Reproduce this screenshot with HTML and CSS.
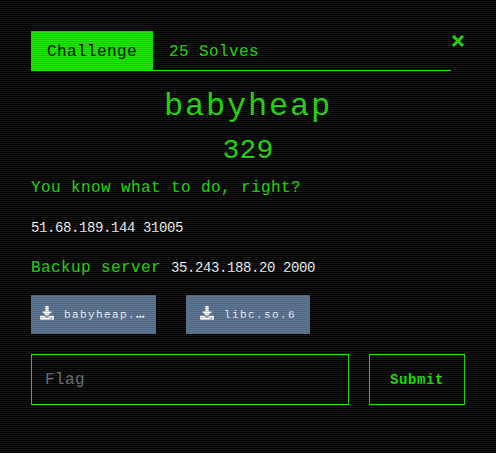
FILE: index.html
```html
<!DOCTYPE html>
<html lang="en">
<head>
<meta charset="utf-8">
<title>babyheap</title>
<link rel="stylesheet" href="styles.css">
</head>
<body>
<main class="modal">
  <header class="head">
    <nav class="tabs"><a class="tab active">Challenge</a><a class="tab">25 Solves</a></nav>
    <svg class="close" viewBox="0 0 14 14"><path d="M2 2l10 10M12 2L2 12"/></svg>
  </header>
  <h2 class="name">babyheap</h2>
  <h3 class="value">329</h3>
  <p class="desc">You know what to do, right?</p>
  <p class="desc"><code>51.68.189.144 31005</code></p>
  <p class="desc">Backup server <code>35.243.188.20 2000</code></p>
  <div class="files">
    <a class="file"><svg class="icon" viewBox="0 0 512 512"><path d="M216 0h80c13 0 24 11 24 24v168h87.700c18 0 27 21 14 34L269.700 378c-7 8-20 8-27 0L90 226c-13-13-4-34 14-34H192V24c0-13 11-24 24-24zm296 376v112c0 13-11 24-24 24H24c-13 0-24-11-24-24V376c0-13 11-24 24-24h146.700l49 49c20 20 52 20 72 0l49-49H488c13 0 24 11 24 24zm-124 88a20 20 0 1 0-40 0 20 20 0 0 0 40 0zm64 0a20 20 0 1 0-40 0 20 20 0 0 0 40 0z"/></svg><span class="label">babyheap.<b class="more">…</b></span></a>
    <a class="file second"><svg class="icon" viewBox="0 0 512 512"><path d="M216 0h80c13 0 24 11 24 24v168h87.700c18 0 27 21 14 34L269.700 378c-7 8-20 8-27 0L90 226c-13-13-4-34 14-34H192V24c0-13 11-24 24-24zm296 376v112c0 13-11 24-24 24H24c-13 0-24-11-24-24V376c0-13 11-24 24-24h146.700l49 49c20 20 52 20 72 0l49-49H488c13 0 24 11 24 24zm-124 88a20 20 0 1 0-40 0 20 20 0 0 0 40 0zm64 0a20 20 0 1 0-40 0 20 20 0 0 0 40 0z"/></svg><span class="label">libc.so.6</span></a>
  </div>
  <form class="answer">
    <input class="flag" type="text" placeholder="Flag">
    <button class="submit" type="button">Submit</button>
  </form>
</main>
</body>
</html>
```
FILE: styles.css
```css
* { box-sizing: border-box; }
body {
  margin: 0;
  height: 453px;
  overflow: hidden;
  background: #000;
  color: #24e40c;
  font: 16px/24px "Liberation Mono", monospace;
  letter-spacing: 0.4px;
}
/* scanlines over the whole page */
body::after {
  content: "";
  position: fixed;
  inset: 0;
  pointer-events: none;
  background: repeating-linear-gradient(transparent 0 1px, rgba(75, 75, 75, 0.3) 1px 2px);
}
.modal { padding: 31px 31px 0; }
.head { display: flex; height: 40px; }
.tabs { display: flex; width: 420px; border-bottom: 1px solid #24e40c; }
.tab { padding: 9px 16px 7px; height: 40px; }
.active { background: #24e60c; color: #000; }
.close { width: 14px; height: 14px; margin-top: 3px; fill: none; stroke: #24e40c; stroke-width: 3; }
.name { margin: 16px 0 0; font-size: 32px; line-height: 40px; font-weight: 400; letter-spacing: 1.8px; text-align: center; }
.value { margin: 7px 0 8px; font-size: 28px; line-height: 34px; font-weight: 400; letter-spacing: 0.2px; text-align: center; }
.desc { margin: 0 0 16px; }
.desc code { font: 14px/20px "Liberation Mono", monospace; letter-spacing: -0.4px; color: #fff; }
.files { display: flex; gap: 30px; margin-top: -1px; }
.file { display: flex; align-items: center; width: 125px; height: 39px; padding-left: 9px; background: #5b7595; color: #fff; }
.second { width: 124px; padding-left: 14px; }
.icon { width: 14px; height: 14px; margin: -4px 10px 0 0; fill: #fff; }
.label { font-size: 11px; line-height: 16px; letter-spacing: 1.4px; }
.more { font-size: 14px; line-height: 1; letter-spacing: 0; }
.answer { display: flex; gap: 20px; margin-top: 20px; }
.flag { width: 318px; height: 51px; padding: 0 13px; border: 1px solid #24e40c; background: transparent; color: #24e40c; font: inherit; letter-spacing: 0.4px; }
.flag::placeholder { color: #6c757d; }
.submit { width: 96px; height: 51px; padding: 0; border: 1px solid #24e40c; background: transparent; color: #24e40c; font: bold 14px "Liberation Mono", monospace; letter-spacing: 0.6px; }
```
